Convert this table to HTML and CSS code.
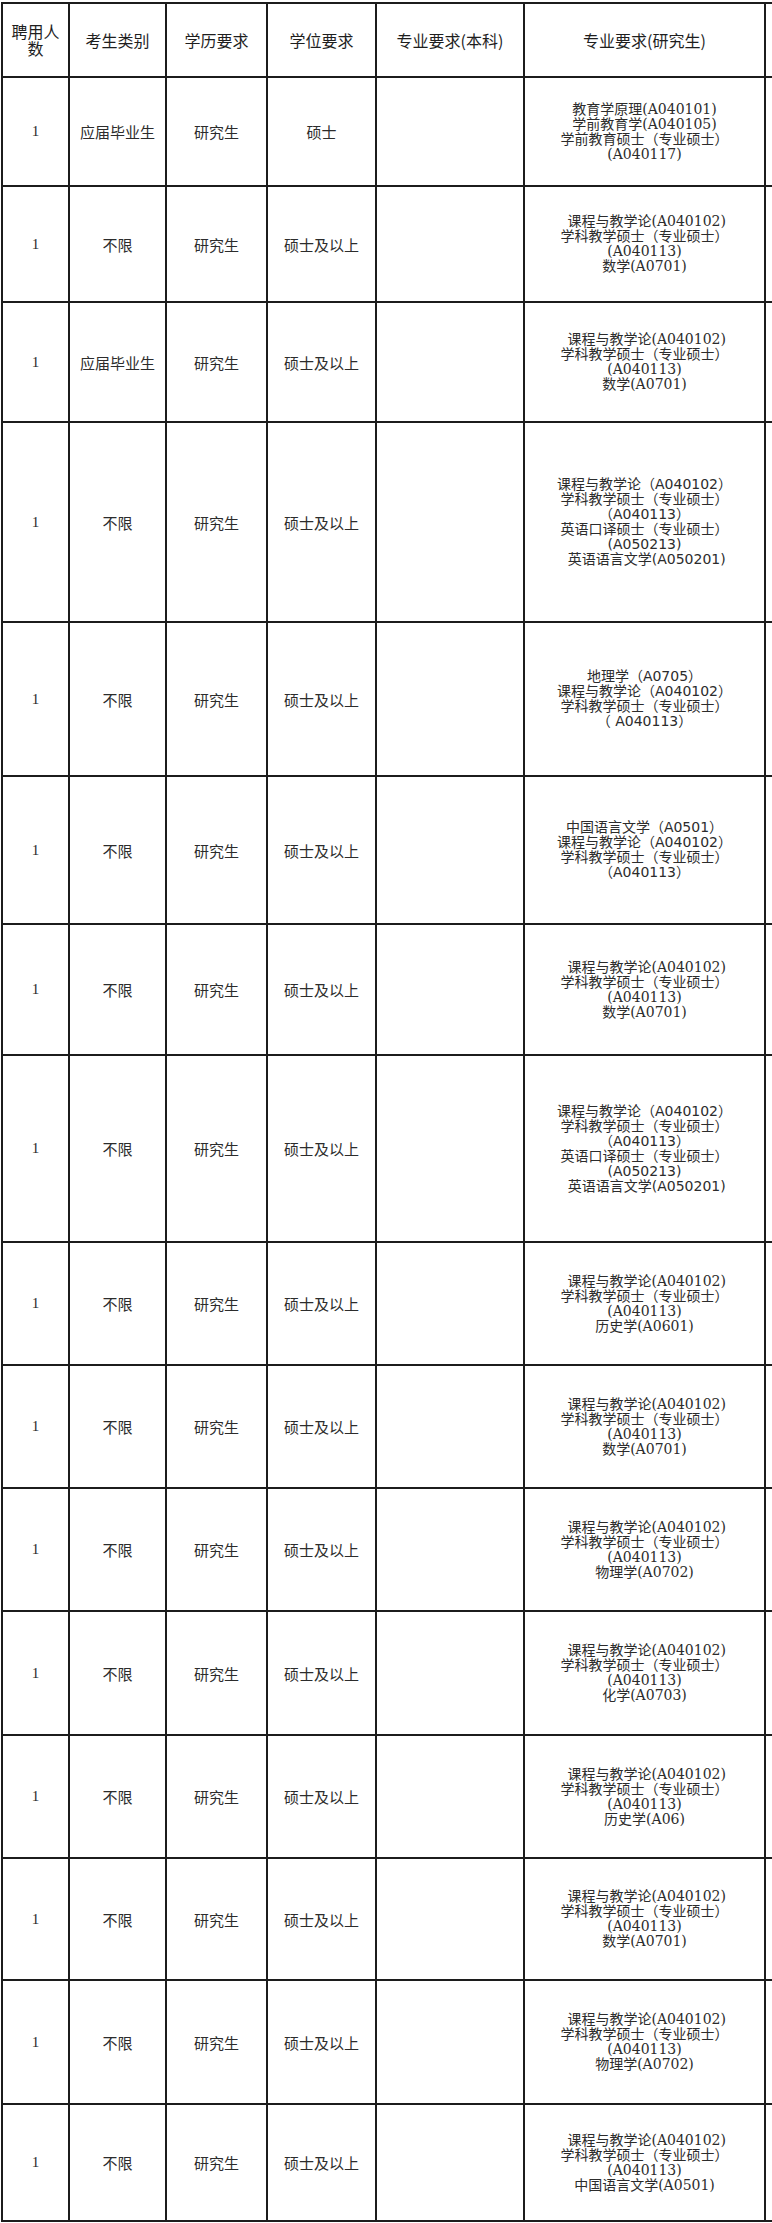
FILE: index.html
```html
<!DOCTYPE html>
<html lang="zh-CN">
<head>
<meta charset="utf-8">
<title>岗位表</title>
<link rel="stylesheet" href="styles.css">
</head>
<body>
<table class="grid">
  <colgroup>
    <col class="c-num">
    <col class="c-type">
    <col class="c-edu">
    <col class="c-deg">
    <col class="c-ug">
    <col class="c-pg">
    <col class="c-more">
  </colgroup>
  <thead>
    <tr class="r0">
      <th>聘用人数</th>
      <th>考生类别</th>
      <th>学历要求</th>
      <th>学位要求</th>
      <th>专业要求(本科)</th>
      <th>专业要求(研究生)</th>
      <th class="cut"></th>
    </tr>
  </thead>
  <tbody>
    <tr class="r1">
      <td class="num">1</td><td>应届毕业生</td><td>研究生</td><td>硕士</td><td></td>
      <td class="major">教育学原理(A040101)<br>学前教育学(A040105)<br>学前教育硕士（专业硕士）<br>(A040117)</td><td class="cut"></td>
    </tr>
    <tr class="r2">
      <td class="num">1</td><td>不限</td><td>研究生</td><td>硕士及以上</td><td></td>
      <td class="major">&nbsp;课程与教学论(A040102)<br>学科教学硕士（专业硕士）<br>(A040113)<br>数学(A0701)</td><td class="cut"></td>
    </tr>
    <tr class="r3">
      <td class="num">1</td><td>应届毕业生</td><td>研究生</td><td>硕士及以上</td><td></td>
      <td class="major">&nbsp;课程与教学论(A040102)<br>学科教学硕士（专业硕士）<br>(A040113)<br>数学(A0701)</td><td class="cut"></td>
    </tr>
    <tr class="r4">
      <td class="num">1</td><td>不限</td><td>研究生</td><td>硕士及以上</td><td></td>
      <td class="major sans">课程与教学论（A040102）<br>学科教学硕士（专业硕士）<br>（A040113）<br>英语口译硕士（专业硕士）<br>(A050213)<br>&nbsp;英语语言文学(A050201)</td><td class="cut"></td>
    </tr>
    <tr class="r5">
      <td class="num">1</td><td>不限</td><td>研究生</td><td>硕士及以上</td><td></td>
      <td class="major sans">地理学（A0705）<br>课程与教学论（A040102）<br>学科教学硕士（专业硕士）<br>（ A040113）</td><td class="cut"></td>
    </tr>
    <tr class="r6">
      <td class="num">1</td><td>不限</td><td>研究生</td><td>硕士及以上</td><td></td>
      <td class="major sans">中国语言文学（A0501）<br>课程与教学论（A040102）<br>学科教学硕士（专业硕士）<br>（A040113）</td><td class="cut"></td>
    </tr>
    <tr class="r7">
      <td class="num">1</td><td>不限</td><td>研究生</td><td>硕士及以上</td><td></td>
      <td class="major">&nbsp;课程与教学论(A040102)<br>学科教学硕士（专业硕士）<br>(A040113)<br>数学(A0701)</td><td class="cut"></td>
    </tr>
    <tr class="r8">
      <td class="num">1</td><td>不限</td><td>研究生</td><td>硕士及以上</td><td></td>
      <td class="major sans">课程与教学论（A040102）<br>学科教学硕士（专业硕士）<br>（A040113）<br>英语口译硕士（专业硕士）<br>(A050213)<br>&nbsp;英语语言文学(A050201)</td><td class="cut"></td>
    </tr>
    <tr class="r9">
      <td class="num">1</td><td>不限</td><td>研究生</td><td>硕士及以上</td><td></td>
      <td class="major">&nbsp;课程与教学论(A040102)<br>学科教学硕士（专业硕士）<br>(A040113)<br>历史学(A0601)</td><td class="cut"></td>
    </tr>
    <tr class="r10">
      <td class="num">1</td><td>不限</td><td>研究生</td><td>硕士及以上</td><td></td>
      <td class="major">&nbsp;课程与教学论(A040102)<br>学科教学硕士（专业硕士）<br>(A040113)<br>数学(A0701)</td><td class="cut"></td>
    </tr>
    <tr class="r11">
      <td class="num">1</td><td>不限</td><td>研究生</td><td>硕士及以上</td><td></td>
      <td class="major">&nbsp;课程与教学论(A040102)<br>学科教学硕士（专业硕士）<br>(A040113)<br>物理学(A0702)</td><td class="cut"></td>
    </tr>
    <tr class="r12">
      <td class="num">1</td><td>不限</td><td>研究生</td><td>硕士及以上</td><td></td>
      <td class="major">&nbsp;课程与教学论(A040102)<br>学科教学硕士（专业硕士）<br>(A040113)<br>化学(A0703)</td><td class="cut"></td>
    </tr>
    <tr class="r13">
      <td class="num">1</td><td>不限</td><td>研究生</td><td>硕士及以上</td><td></td>
      <td class="major">&nbsp;课程与教学论(A040102)<br>学科教学硕士（专业硕士）<br>(A040113)<br>历史学(A06)</td><td class="cut"></td>
    </tr>
    <tr class="r14">
      <td class="num">1</td><td>不限</td><td>研究生</td><td>硕士及以上</td><td></td>
      <td class="major">&nbsp;课程与教学论(A040102)<br>学科教学硕士（专业硕士）<br>(A040113)<br>数学(A0701)</td><td class="cut"></td>
    </tr>
    <tr class="r15">
      <td class="num">1</td><td>不限</td><td>研究生</td><td>硕士及以上</td><td></td>
      <td class="major">&nbsp;课程与教学论(A040102)<br>学科教学硕士（专业硕士）<br>(A040113)<br>物理学(A0702)</td><td class="cut"></td>
    </tr>
    <tr class="r16">
      <td class="num">1</td><td>不限</td><td>研究生</td><td>硕士及以上</td><td></td>
      <td class="major">&nbsp;课程与教学论(A040102)<br>学科教学硕士（专业硕士）<br>(A040113)<br>中国语言文学(A0501)</td><td class="cut"></td>
    </tr>
  </tbody>
</table>
</body>
</html>
```

FILE: styles.css
```css
html, body {
  margin: 0;
  padding: 0;
  background: #ffffff;
  overflow: hidden;
}

body {
  padding: 2px 0 0 1px;
  font-family: "Noto Sans CJK SC", "Noto Sans", sans-serif;
  color: #2c2c2c;
}

.grid {
  border-collapse: collapse;
  table-layout: fixed;
  width: 771px;
}

.c-num  { width: 67px; }
.c-type { width: 97px; }
.c-edu  { width: 101px; }
.c-deg  { width: 109px; }
.c-ug   { width: 148px; }
.c-pg   { width: 241px; }
.c-more { width: 8px; }

.grid th,
.grid td {
  border: 2px solid #1c1c1c;
  padding: 0 4px;
  text-align: center;
  vertical-align: middle;
}

.grid th.cut,
.grid td.cut {
  border-right: none;
  padding: 0;
}

.grid th {
  font-weight: normal;
  font-size: 16px;
  line-height: 17px;
  color: #1e1e1e;
}

.grid td {
  font-size: 15px;
  line-height: 15px;
}

.grid td.num {
  font-family: "Liberation Serif", serif;
  font-size: 15px;
}

.grid td.major {
  font-family: "DejaVu Serif", "Noto Sans CJK SC", serif;
  font-size: 14px;
  white-space: nowrap;
}

.grid td.major.sans {
  font-family: "DejaVu Sans", "Noto Sans CJK SC", sans-serif;
}

.r0  { height: 74px; }
.r1  { height: 109px; }
.r2  { height: 116px; }
.r3  { height: 120px; }
.r4  { height: 200px; }
.r5  { height: 154px; }
.r6  { height: 148px; }
.r7  { height: 131px; }
.r8  { height: 187px; }
.r9  { height: 123px; }
.r10 { height: 123px; }
.r11 { height: 123px; }
.r12 { height: 124px; }
.r13 { height: 123px; }
.r14 { height: 122px; }
.r15 { height: 124px; }
.r16 { height: 117px; }
```
